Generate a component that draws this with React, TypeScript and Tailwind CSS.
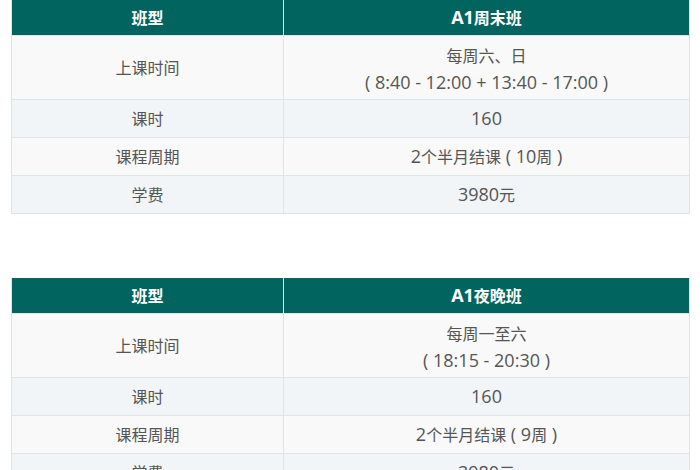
import React from "react";

function T({ s }: { s: string }) {
  const parts = s.split(/([\u3000-\u303f\u4e00-\u9fff\uff00-\uffef]+)/).filter((p) => p.length > 0);
  return (
    <>
      {parts.map((p, i) =>
        /[\u3000-\u303f\u4e00-\u9fff\uff00-\uffef]/.test(p) ? (
          <span key={i}>{p}</span>
        ) : (
          <span key={i} className="text-[18px] whitespace-pre">
            {p}
          </span>
        )
      )}
    </>
  );
}

type Row = { label: string; lines: string[] };

function Table({ title, rows }: { title: string; rows: Row[] }) {
  return (
    <div className="mx-[11px] w-[679px] border-l border-r border-b border-[#dfe4e7]">
      <div className="flex h-[35px] bg-[#02645f] text-white text-[16px] font-bold leading-[26px]">
        <div className="w-[272px] flex items-center justify-center border-r border-[#d8e2e2]">班型</div>
        <div className="flex-1 flex items-center justify-center">
          <div>
            <T s={title} />
          </div>
        </div>
      </div>
      {rows.map((r, i) => (
        <div
          key={i}
          className={`flex border-t border-[#dfe4e7] text-[16px] text-[#555] leading-[26px] ${i % 2 === 0 ? "bg-[#f9f9f9]" : "bg-[#f1f5f8]"} ${r.lines.length > 1 ? "h-[64px]" : "h-[38px]"}`}
        >
          <div className="w-[272px] flex items-center justify-center border-r border-[#dfe4e7]">{r.label}</div>
          <div className={`flex-1 flex flex-col items-center justify-center ${r.lines.length > 1 ? "pt-[3px]" : ""}`}>
            {r.lines.map((l, j) => (
              <div key={j}>
                <T s={l} />
              </div>
            ))}
          </div>
        </div>
      ))}
    </div>
  );
}

export default function App() {
  return (
    <div
      className="w-[700px] h-[470px] overflow-hidden bg-white"
      style={{ fontFamily: '"Open Sans", "Noto Sans CJK SC", sans-serif' }}
    >
      <Table
        title="A1周末班"
        rows={[
          { label: "上课时间", lines: ["每周六、日", "( 8:40 - 12:00 + 13:40 - 17:00 )"] },
          { label: "课时", lines: ["160"] },
          { label: "课程周期", lines: ["2个半月结课 ( 10周 )"] },
          { label: "学费", lines: ["3980元"] },
        ]}
      />
      <div className="h-[64px]" />
      <Table
        title="A1夜晚班"
        rows={[
          { label: "上课时间", lines: ["每周一至六", "( 18:15 - 20:30 )"] },
          { label: "课时", lines: ["160"] },
          { label: "课程周期", lines: ["2个半月结课 ( 9周 )"] },
          { label: "学费", lines: ["3980元"] },
        ]}
      />
    </div>
  );
}
